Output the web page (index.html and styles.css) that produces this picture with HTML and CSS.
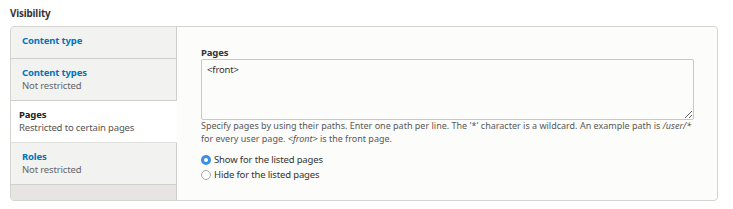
FILE: index.html
```html
<!DOCTYPE html>
<html>
<head>
<meta charset="utf-8">
<link rel="stylesheet" href="styles.css">
</head>
<body>
<div class="page">
  <h4 class="section-title">Visibility</h4>
  <div class="vtabs">
    <ul class="vtab-list">
      <li class="vtab vtab-first"><a class="vtab-title" href="#">Content type</a></li>
      <li class="vtab"><a class="vtab-title" href="#">Content types</a><span class="vtab-summary">Not restricted</span></li>
      <li class="vtab is-selected"><strong class="vtab-title">Pages</strong><span class="vtab-summary">Restricted to certain pages</span></li>
      <li class="vtab"><a class="vtab-title" href="#">Roles</a><span class="vtab-summary">Not restricted</span></li>
    </ul>
    <div class="vtab-pane">
      <label class="field-label" for="pages">Pages</label>
      <textarea id="pages" class="field-textarea" readonly>&lt;front&gt;</textarea>
      <div class="field-desc">Specify pages by using their paths. Enter one path per line. The '*' character is a wildcard. An example path is <em>/user/*</em> for every user page. <em>&lt;front&gt;</em> is the front page.</div>
      <div class="radios">
        <label class="radio"><input type="radio" name="neg" checked><span>Show for the listed pages</span></label>
        <label class="radio"><input type="radio" name="neg"><span>Hide for the listed pages</span></label>
      </div>
    </div>
  </div>
</div>
</body>
</html>
```
FILE: styles.css
```css
html, body {
  margin: 0;
  padding: 0;
  background: #ffffff;
}
body {
  font-family: "Noto Sans", "DejaVu Sans", sans-serif;
  font-size: 9.5px;
  letter-spacing: -0.15px;
  color: #333333;
}
.page {
  padding: 7px 15px 0 10px;
}
.section-title {
  margin: 0 0 6px 0;
  font-size: 9.8px;
  line-height: 13px;
  font-weight: bold;
  color: #333333;
}
.vtabs {
  display: flex;
  height: 173px;
  border: 1px solid #d4d4d0;
  border-radius: 4px;
  background: #fcfcfa;
  overflow: hidden;
}
.vtab-list {
  list-style: none;
  margin: 0;
  padding: 0;
  width: 165px;
  flex: none;
  background: #e6e5e1;
  border-right: 1px solid #cfcfcb;
}
.vtab {
  display: flex;
  flex-direction: column;
  padding: 7px 8px 8px 11px;
  background: #f2f2f0;
  border-bottom: 1px solid #cfcfcb;
  line-height: 13px;
}
.vtab-first {
  padding-bottom: 11px;
}
.vtab-title {
  font-weight: bold;
  color: #0074bd;
  text-decoration: none;
}
.vtab-summary {
  color: #666666;
}
.vtab.is-selected {
  background: #ffffff;
  padding-left: 8px;
  margin-right: -1px;
  border-bottom-color: #e0e0dc;
}
.vtab.is-selected .vtab-title {
  color: #222222;
}
.vtab.is-selected .vtab-summary {
  color: #555555;
}
.vtab-pane {
  flex: 1;
  padding: 19px 23px 0 24px;
}
.field-label {
  display: block;
  font-weight: bold;
  line-height: 13px;
  color: #333333;
}
.field-textarea {
  display: block;
  box-sizing: border-box;
  width: 100%;
  height: 61px;
  margin: 0;
  padding: 3px 5px;
  border: 1px solid #c8c8c4;
  border-radius: 2px;
  background: #fcfcfa;
  font-family: "Noto Sans", "DejaVu Sans", sans-serif;
  font-size: 9.5px;
  letter-spacing: -0.15px;
  line-height: 13px;
  color: #333333;
  resize: vertical;
  outline: none;
}
.field-desc {
  margin-top: 0;
  font-size: 9px;
  letter-spacing: 0;
  line-height: 12.5px;
  color: #595959;
}
.radios {
  margin-top: 7px;
  display: flex;
  flex-direction: column;
}
.radio {
  display: flex;
  align-items: center;
  height: 15px;
  color: #333333;
}
.radio input {
  -webkit-appearance: none;
  appearance: none;
  box-sizing: border-box;
  width: 10px;
  height: 10px;
  margin: 0 3px 0 0;
  border: 1px solid #a8a8a8;
  border-radius: 50%;
  background: #ffffff;
}
.radio input:checked {
  border: 3px solid #3b8fe5;
  background: #ffffff;
}
```
